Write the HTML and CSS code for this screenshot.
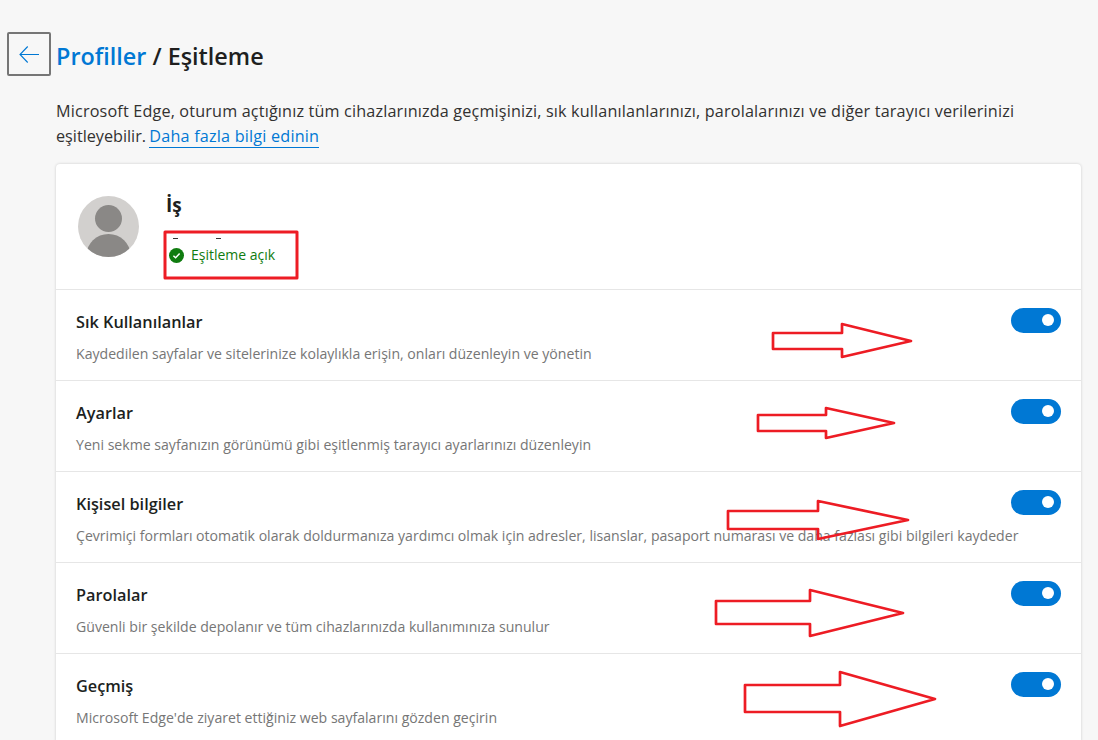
FILE: index.html
```html
<!DOCTYPE html>
<html lang="tr">
<head>
<meta charset="utf-8">
<title>Profiller / Eşitleme</title>
<link rel="stylesheet" href="styles.css">
</head>
<body>
<div class="page">
  <header class="head">
    <button class="back" aria-label="Geri">
      <svg width="20" height="17" viewBox="0 0 20 17" fill="none" stroke="#0078d4" stroke-width="1.1"><path d="M1 8.5H20M8.7 .5L1 8.5L8.7 16.5"/></svg>
    </button>
    <h1 class="title"><a class="crumb">Profiller</a> / Eşitleme</h1>
  </header>
  <div class="content">
    <p class="intro">Microsoft Edge, oturum açtığınız tüm cihazlarınızda geçmişinizi, sık kullanılanlarınızı, parolalarınızı ve diğer tarayıcı verilerinizi eşitleyebilir. <a class="more">Daha fazla bilgi edinin</a></p>
    <section class="card">
      <div class="profile">
        <svg class="avatar" viewBox="0 0 61 61"><defs><clipPath id="c"><circle cx="30.5" cy="30.5" r="30.5"/></clipPath></defs><circle cx="30.5" cy="30.5" r="30.5" fill="#d2d0ce"/><g clip-path="url(#c)" fill="#8a8886"><circle cx="30.5" cy="22.5" r="13.5"/><ellipse cx="30.5" cy="59" rx="22" ry="21"/></g></svg>
        <div class="who">
          <div class="name">İş</div>
          <div class="marks"><i></i><i></i></div>
          <div class="status">
            <svg width="15" height="15" viewBox="0 0 15 15"><circle cx="7.5" cy="7.5" r="7.5" fill="#107c10"/><path d="M4.4 7.8L6.6 9.8L10.6 5.6" fill="none" stroke="#fff" stroke-width="1.5"/></svg>
            <span>Eşitleme açık</span>
          </div>
        </div>
      </div>
      <div class="row"><div class="row-text"><div class="row-t">Sık Kullanılanlar</div><div class="row-d">Kaydedilen sayfalar ve sitelerinize kolaylıkla erişin, onları düzenleyin ve yönetin</div></div><span class="toggle"></span></div>
      <div class="row"><div class="row-text"><div class="row-t">Ayarlar</div><div class="row-d">Yeni sekme sayfanızın görünümü gibi eşitlenmiş tarayıcı ayarlarınızı düzenleyin</div></div><span class="toggle"></span></div>
      <div class="row"><div class="row-text"><div class="row-t">Kişisel bilgiler</div><div class="row-d">Çevrimiçi formları otomatik olarak doldurmanıza yardımcı olmak için adresler, lisanslar, pasaport numarası ve daha fazlası gibi bilgileri kaydeder</div></div><span class="toggle"></span></div>
      <div class="row"><div class="row-text"><div class="row-t">Parolalar</div><div class="row-d">Güvenli bir şekilde depolanır ve tüm cihazlarınızda kullanımınıza sunulur</div></div><span class="toggle"></span></div>
      <div class="row"><div class="row-text"><div class="row-t">Geçmiş</div><div class="row-d">Microsoft Edge'de ziyaret ettiğiniz web sayfalarını gözden geçirin</div></div><span class="toggle"></span></div>
    </section>
  </div>
</div>
<svg class="annot" width="1098" height="740" viewBox="0 0 1098 740" fill="none" stroke="#ed1c24" stroke-width="2.7" stroke-linejoin="round">
  <rect x="165" y="232" width="132" height="46" stroke-width="3"/>
  <path d="M773 333H842V324L911 341L842 357V349H773Z"/>
  <path d="M758 415H826V408L894 423L826 438V431H758Z"/>
  <path d="M728 511H818V501L908 520L818 539V529H728Z"/>
  <path d="M716 601H810V590L903 613L810 636V624H716Z"/>
  <path d="M745 685H840V672L935 699L840 726V712H745Z"/>
</svg>
</body>
</html>
```
FILE: styles.css
```css
html, body { margin: 0; height: 100%; overflow: hidden; }
body { background: #f7f7f7; color: #201f1e; font-family: "Open Sans", "Noto Sans", sans-serif; }
.page { width: 1098px; height: 740px; overflow: hidden; padding: 32px 17px 0 7px; box-sizing: border-box; }
.head { display: flex; align-items: flex-start; gap: 4px; }
.back { width: 44px; height: 44px; box-sizing: border-box; border: 2px solid #767676; border-radius: 2px; background: transparent; padding: 0; display: flex; align-items: center; justify-content: center; }
.title { margin: 8px 0 0 1px; font-size: 23.4px; line-height: 32px; font-weight: 600; }
.crumb { color: #0078d4; }
.content { margin: 23px 0 0 49px; }
.intro { margin: 0 0 15px; font-size: 16.2px; line-height: 25px; color: #323130; }
.intro::first-line { letter-spacing: .16px; }
.more { color: #0078d4; border-bottom: 1px solid #0078d4; letter-spacing: .2px; margin-left: -1px; }
.card { background: #fff; border-radius: 4px; box-shadow: 0 0 3px rgba(0,0,0,.18); }
.profile { display: flex; height: 125px; box-sizing: border-box; padding: 32px 0 0 22px; gap: 27px; }
.avatar { width: 61px; height: 61px; flex: none; }
.name { font-size: 19px; line-height: 22px; font-weight: 700; margin-top: -2px; }
.marks { display: flex; gap: 38px; height: 2px; margin: 22px 0 0 7px; }
.marks i { width: 5px; height: 1px; background: #333; }
.status { display: flex; align-items: center; gap: 7px; margin: 5px 0 0 3px; font-size: 14px; line-height: 20px; color: #107c10; }
.row { height: 91px; box-sizing: border-box; border-top: 1px solid #e6e6e6; padding: 18px 20px 0; display: flex; justify-content: space-between; align-items: flex-start; }
.row-text { flex: 1; min-width: 0; }
.row-t { font-size: 16.3px; line-height: 28px; font-weight: 600; }
.row-d { font-size: 14.1px; line-height: 20px; margin-top: 8px; color: #767676; white-space: nowrap; }
.toggle { width: 50px; height: 25px; border-radius: 13px; background: #0078d4; position: relative; flex: none; }
.toggle::after { content: ""; position: absolute; right: 7px; top: 6px; width: 12px; height: 12px; border-radius: 50%; background: #fff; }
.annot { position: absolute; left: 0; top: 0; pointer-events: none; }
```
